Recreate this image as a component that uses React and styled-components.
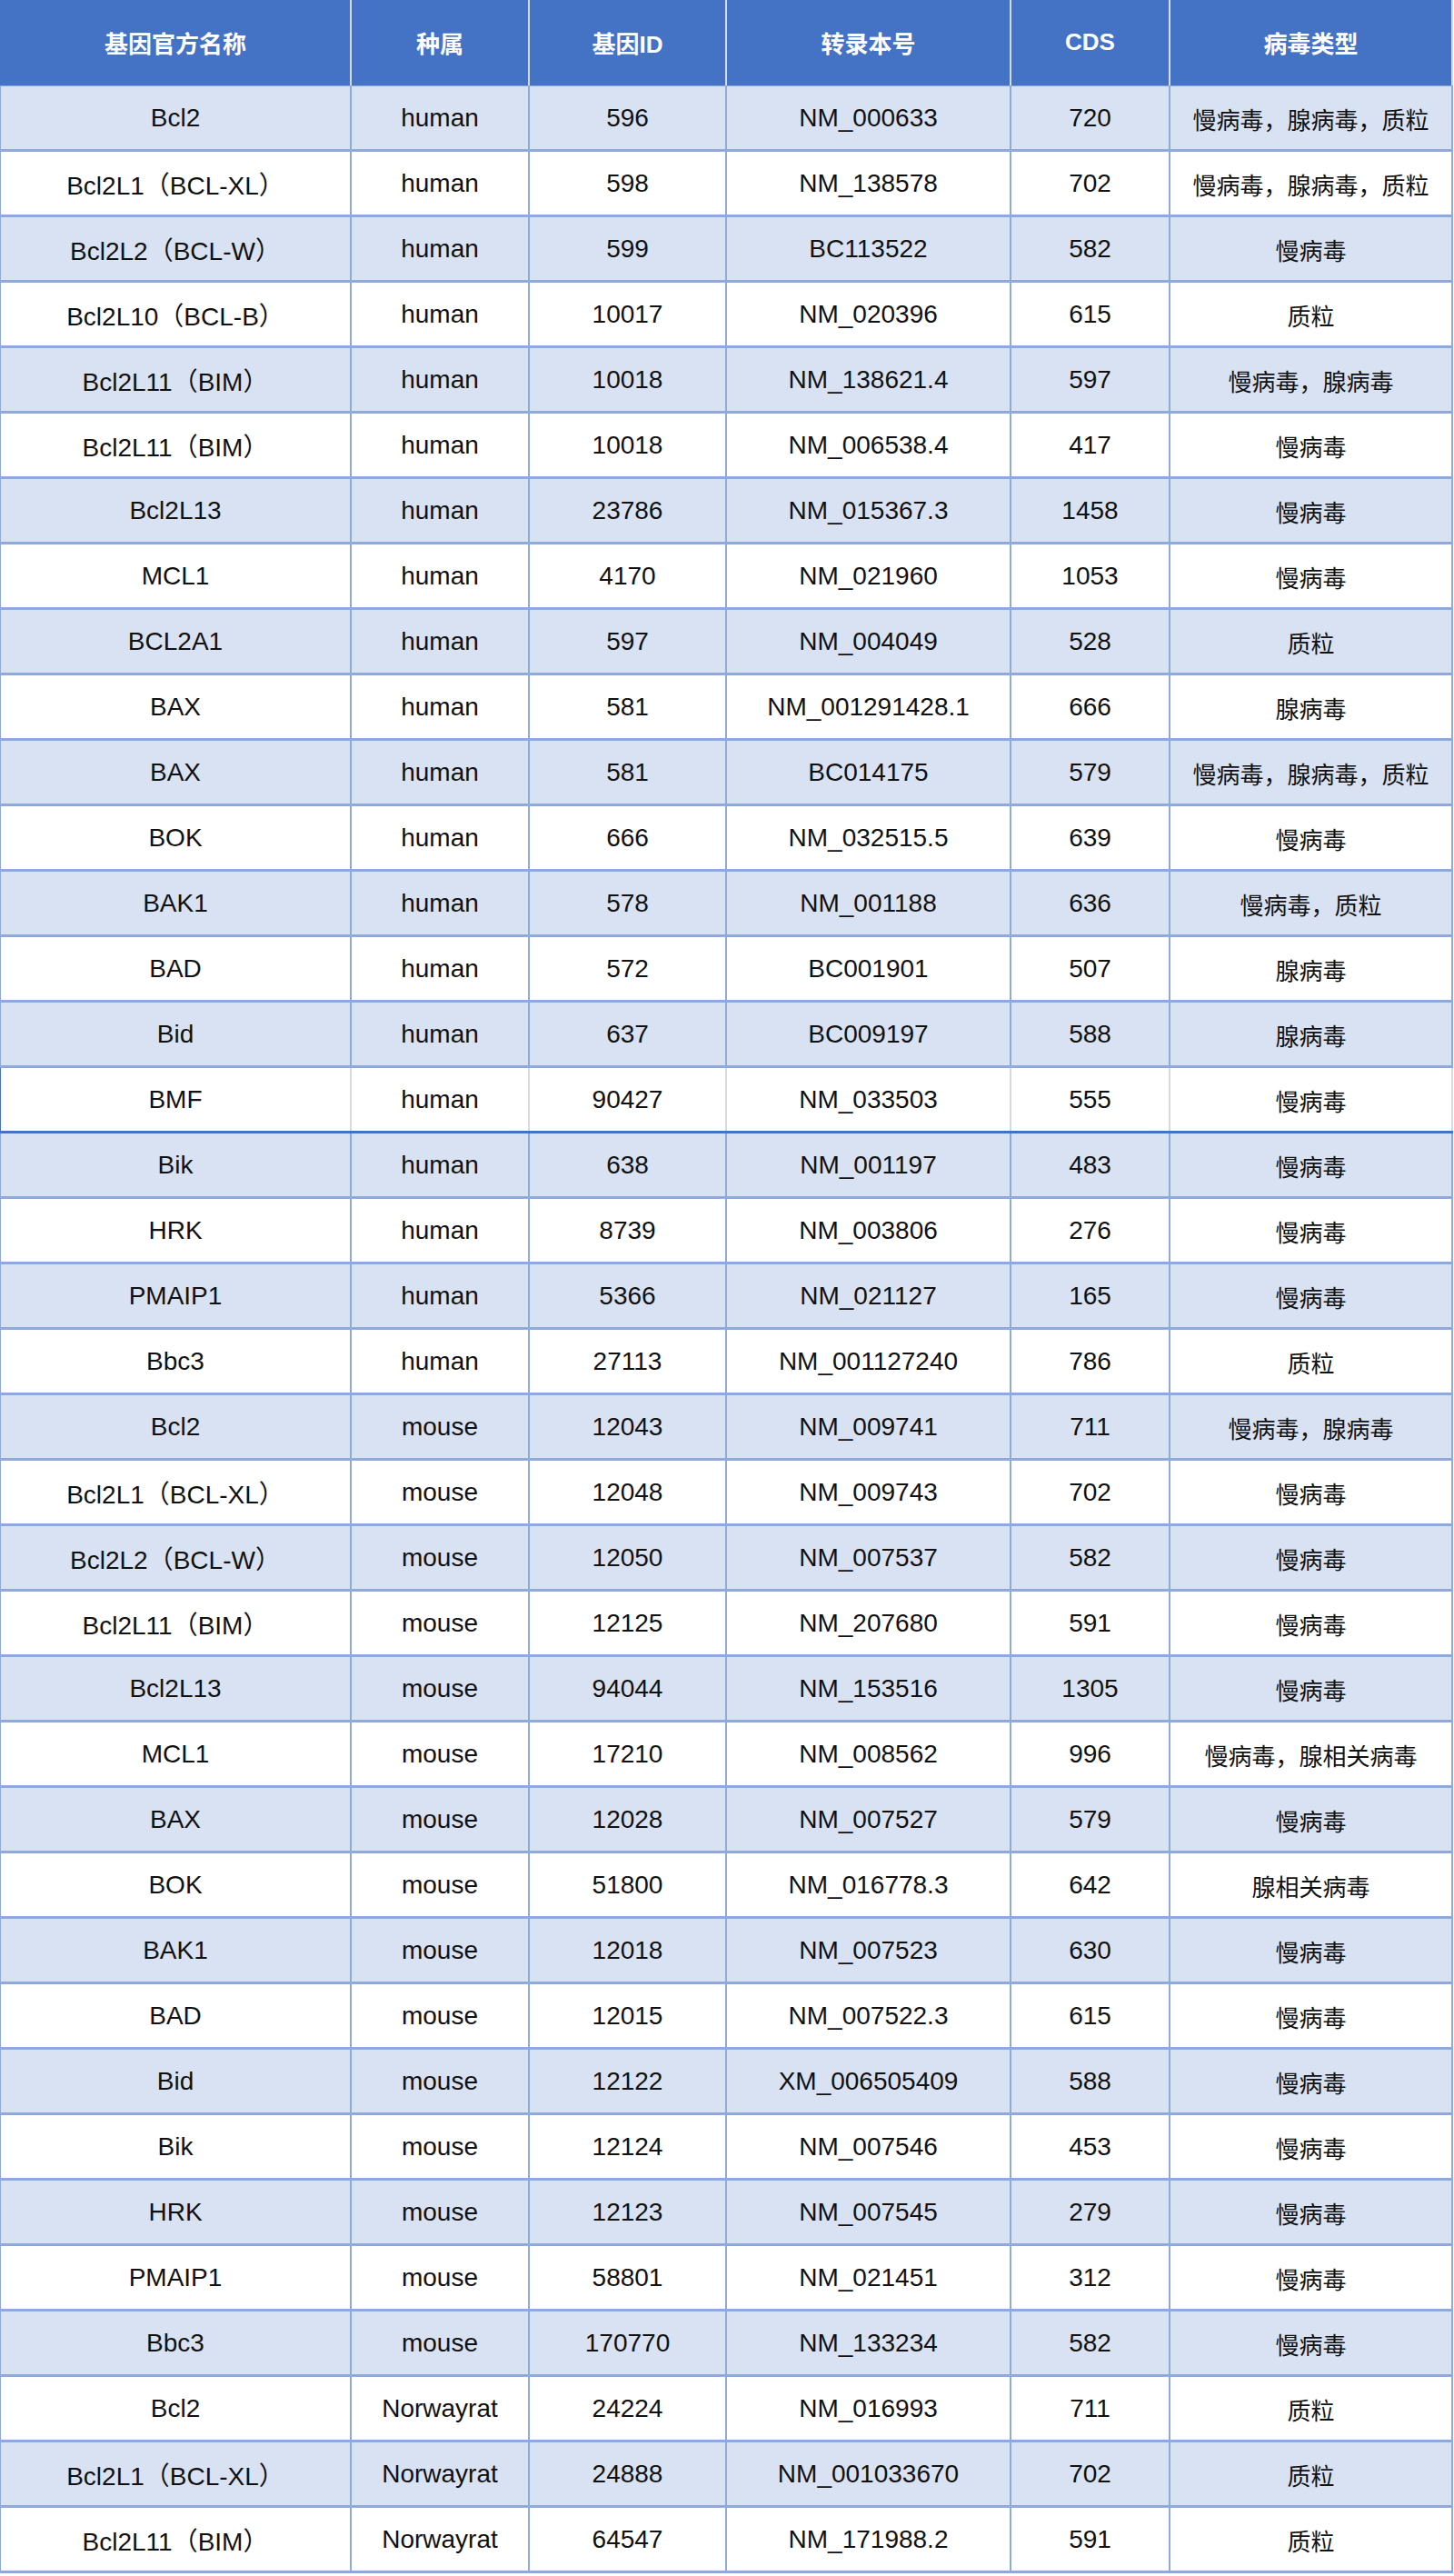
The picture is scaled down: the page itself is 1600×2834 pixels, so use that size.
import React from "react";
import styled, { createGlobalStyle } from "styled-components";

const GlobalStyle = createGlobalStyle`
  html, body {
    margin: 0;
    padding: 0;
    background: #ffffff;
  }
  body {
    font-family: "Liberation Sans", "Noto Sans CJK SC", sans-serif;
    color: #111;
  }
`;

const COLUMNS = "386px 196px 217px 313px 175px 311px";

const headers = ["基因官方名称", "种属", "基因ID", "转录本号", "CDS", "病毒类型"];

const rows = [
  ["Bcl2", "human", "596", "NM_000633", "720", "慢病毒，腺病毒，质粒"],
  ["Bcl2L1（BCL-XL）", "human", "598", "NM_138578", "702", "慢病毒，腺病毒，质粒"],
  ["Bcl2L2（BCL-W）", "human", "599", "BC113522", "582", "慢病毒"],
  ["Bcl2L10（BCL-B）", "human", "10017", "NM_020396", "615", "质粒"],
  ["Bcl2L11（BIM）", "human", "10018", "NM_138621.4", "597", "慢病毒，腺病毒"],
  ["Bcl2L11（BIM）", "human", "10018", "NM_006538.4", "417", "慢病毒"],
  ["Bcl2L13", "human", "23786", "NM_015367.3", "1458", "慢病毒"],
  ["MCL1", "human", "4170", "NM_021960", "1053", "慢病毒"],
  ["BCL2A1", "human", "597", "NM_004049", "528", "质粒"],
  ["BAX", "human", "581", "NM_001291428.1", "666", "腺病毒"],
  ["BAX", "human", "581", "BC014175", "579", "慢病毒，腺病毒，质粒"],
  ["BOK", "human", "666", "NM_032515.5", "639", "慢病毒"],
  ["BAK1", "human", "578", "NM_001188", "636", "慢病毒，质粒"],
  ["BAD", "human", "572", "BC001901", "507", "腺病毒"],
  ["Bid", "human", "637", "BC009197", "588", "腺病毒"],
  ["BMF", "human", "90427", "NM_033503", "555", "慢病毒"],
  ["Bik", "human", "638", "NM_001197", "483", "慢病毒"],
  ["HRK", "human", "8739", "NM_003806", "276", "慢病毒"],
  ["PMAIP1", "human", "5366", "NM_021127", "165", "慢病毒"],
  ["Bbc3", "human", "27113", "NM_001127240", "786", "质粒"],
  ["Bcl2", "mouse", "12043", "NM_009741", "711", "慢病毒，腺病毒"],
  ["Bcl2L1（BCL-XL）", "mouse", "12048", "NM_009743", "702", "慢病毒"],
  ["Bcl2L2（BCL-W）", "mouse", "12050", "NM_007537", "582", "慢病毒"],
  ["Bcl2L11（BIM）", "mouse", "12125", "NM_207680", "591", "慢病毒"],
  ["Bcl2L13", "mouse", "94044", "NM_153516", "1305", "慢病毒"],
  ["MCL1", "mouse", "17210", "NM_008562", "996", "慢病毒，腺相关病毒"],
  ["BAX", "mouse", "12028", "NM_007527", "579", "慢病毒"],
  ["BOK", "mouse", "51800", "NM_016778.3", "642", "腺相关病毒"],
  ["BAK1", "mouse", "12018", "NM_007523", "630", "慢病毒"],
  ["BAD", "mouse", "12015", "NM_007522.3", "615", "慢病毒"],
  ["Bid", "mouse", "12122", "XM_006505409", "588", "慢病毒"],
  ["Bik", "mouse", "12124", "NM_007546", "453", "慢病毒"],
  ["HRK", "mouse", "12123", "NM_007545", "279", "慢病毒"],
  ["PMAIP1", "mouse", "58801", "NM_021451", "312", "慢病毒"],
  ["Bbc3", "mouse", "170770", "NM_133234", "582", "慢病毒"],
  ["Bcl2", "Norwayrat", "24224", "NM_016993", "711", "质粒"],
  ["Bcl2L1（BCL-XL）", "Norwayrat", "24888", "NM_001033670", "702", "质粒"],
  ["Bcl2L11（BIM）", "Norwayrat", "64547", "NM_171988.2", "591", "质粒"],
];

// the BMF row carries a darker rule under it and grey column lines
const SPECIAL_ROW = 15;

function App() {
  return (
    <>
      <GlobalStyle />
      <Table>
        <HeadRow>
          {headers.map((h, i) => (
            <HeadCell key={h} $last={i === headers.length - 1}>
              {h}
            </HeadCell>
          ))}
        </HeadRow>
        {rows.map((r, i) => (
          <Row key={i} $shade={i % 2 === 0} $special={i === SPECIAL_ROW}>
            {r.map((c, j) => (
              <Cell key={j} $special={i === SPECIAL_ROW} $cjk={j === 5}>
                {c}
              </Cell>
            ))}
          </Row>
        ))}
      </Table>
    </>
  );
}

const Table = styled.div`
  width: 1599px;
  display: flex;
  flex-direction: column;
`;

const HeadRow = styled.div`
  display: grid;
  grid-template-columns: ${COLUMNS};
  height: 95px;
  box-sizing: border-box;
  padding-left: 1px;
  background: #4472c4;
  border-bottom: 1px solid #8eaadb;
`;

const HeadCell = styled.div`
  display: flex;
  align-items: center;
  justify-content: center;
  box-sizing: border-box;
  border-right: 2px solid ${(p) => (p.$last ? "#dcdcdc" : "#d6dbe4")};
  color: #ffffff;
  font-weight: 700;
  font-size: 26px;
  padding-bottom: 2px;
`;

const Row = styled.div`
  display: grid;
  grid-template-columns: ${COLUMNS};
  height: 72px;
  box-sizing: border-box;
  background: ${(p) => (p.$shade ? "#d9e2f3" : "#ffffff")};
  border-left: ${(p) => (p.$special ? "2px solid #4472c4" : "1px solid #8eaadb")};
  border-bottom: 3px solid ${(p) => (p.$special ? "#4472c4" : "#8eaadb")};
  margin-left: ${(p) => (p.$special ? "-1px" : "0")};
`;

const Cell = styled.div`
  display: flex;
  align-items: center;
  justify-content: center;
  box-sizing: border-box;
  border-right: 2px solid ${(p) => (p.$special ? "#d9d9d9" : "#8eaadb")};
  font-size: ${(p) => (p.$cjk ? "26px" : "28px")};
  color: #111111;
  white-space: nowrap;
  padding-top: 1px;
`;

export default App;
